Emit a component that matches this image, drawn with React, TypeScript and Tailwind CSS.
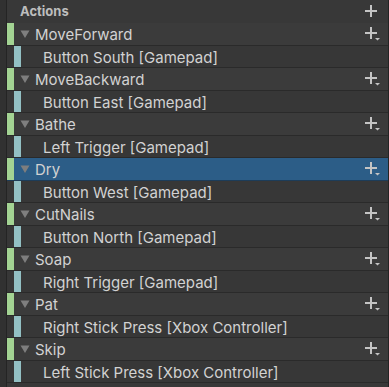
import React from "react";

type Action = { name: string; binding: string; selected?: boolean };

const actions: Action[] = [
  { name: "MoveForward", binding: "Button South [Gamepad]" },
  { name: "MoveBackward", binding: "Button East [Gamepad]" },
  { name: "Bathe", binding: "Left Trigger [Gamepad]" },
  { name: "Dry", binding: "Button West [Gamepad]", selected: true },
  { name: "CutNails", binding: "Button North [Gamepad]" },
  { name: "Soap", binding: "Right Trigger [Gamepad]" },
  { name: "Pat", binding: "Right Stick Press [Xbox Controller]" },
  { name: "Skip", binding: "Left Stick Press [Xbox Controller]" },
];

function PlusIcon({ dropdown }: { dropdown?: boolean }) {
  return (
    <svg width="18" height="16" viewBox="0 0 18 16" className="shrink-0">
      <rect x="0" y="6" width="12" height="2" fill="#c4c4c4" />
      <rect x="5" y="1" width="2" height="12" fill="#c4c4c4" />
      {dropdown && <path d="M10 12 L15 12 L12.5 14.5 Z" fill="#c4c4c4" />}
    </svg>
  );
}

function Triangle() {
  return (
    <svg width="10" height="8" viewBox="0 0 10 8" className="shrink-0">
      <path d="M0.5 0.5 L9.5 0.5 L5 8 Z" fill="#7e7e7e" />
    </svg>
  );
}

export default function App() {
  return (
    <div
      className="w-[389px] h-[387px] overflow-hidden bg-[#383838] flex text-[15px] text-[#d2d2d2]"
      style={{ fontFamily: "Inter, 'Noto Sans', sans-serif" }}
    >
      <div className="w-[7px] shrink-0 bg-[#313131] border-r border-[#242424]" />
      <div className="flex-1 flex flex-col border-r border-[#242424]">
        <div className="h-[23px] shrink-0 flex items-center justify-between pl-[13px] pr-[5px] bg-[#383838]">
          <span className="font-bold text-[13px] text-[#bdbdbd]">Actions</span>
          <PlusIcon />
        </div>
        {actions.map((a) => (
          <React.Fragment key={a.name}>
            <div
              className={`h-[23px] shrink-0 flex items-stretch border-b ${
                a.selected
                  ? "bg-[#2c5d87] border-[#1d3c58]"
                  : "bg-[#3b3b3b] border-[#2a2a2a]"
              }`}
            >
              <div className="w-[7px] shrink-0 bg-[#a3d393]" />
              <div className="flex-1 flex items-center pl-[6px] pr-[5px]">
                <Triangle />
                <span className="ml-[5px] flex-1 leading-none pt-[1px]">{a.name}</span>
                <PlusIcon dropdown />
              </div>
            </div>
            <div className="h-[22px] shrink-0 flex items-stretch bg-[#373737] border-b border-[#2a2a2a]">
              <div className="w-[7px] shrink-0" />
              <div className="w-[7px] shrink-0 bg-[#93c0c4]" />
              <span className="flex items-center pl-[22px] leading-none pt-[2px]">{a.binding}</span>
            </div>
          </React.Fragment>
        ))}
      </div>
    </div>
  );
}
